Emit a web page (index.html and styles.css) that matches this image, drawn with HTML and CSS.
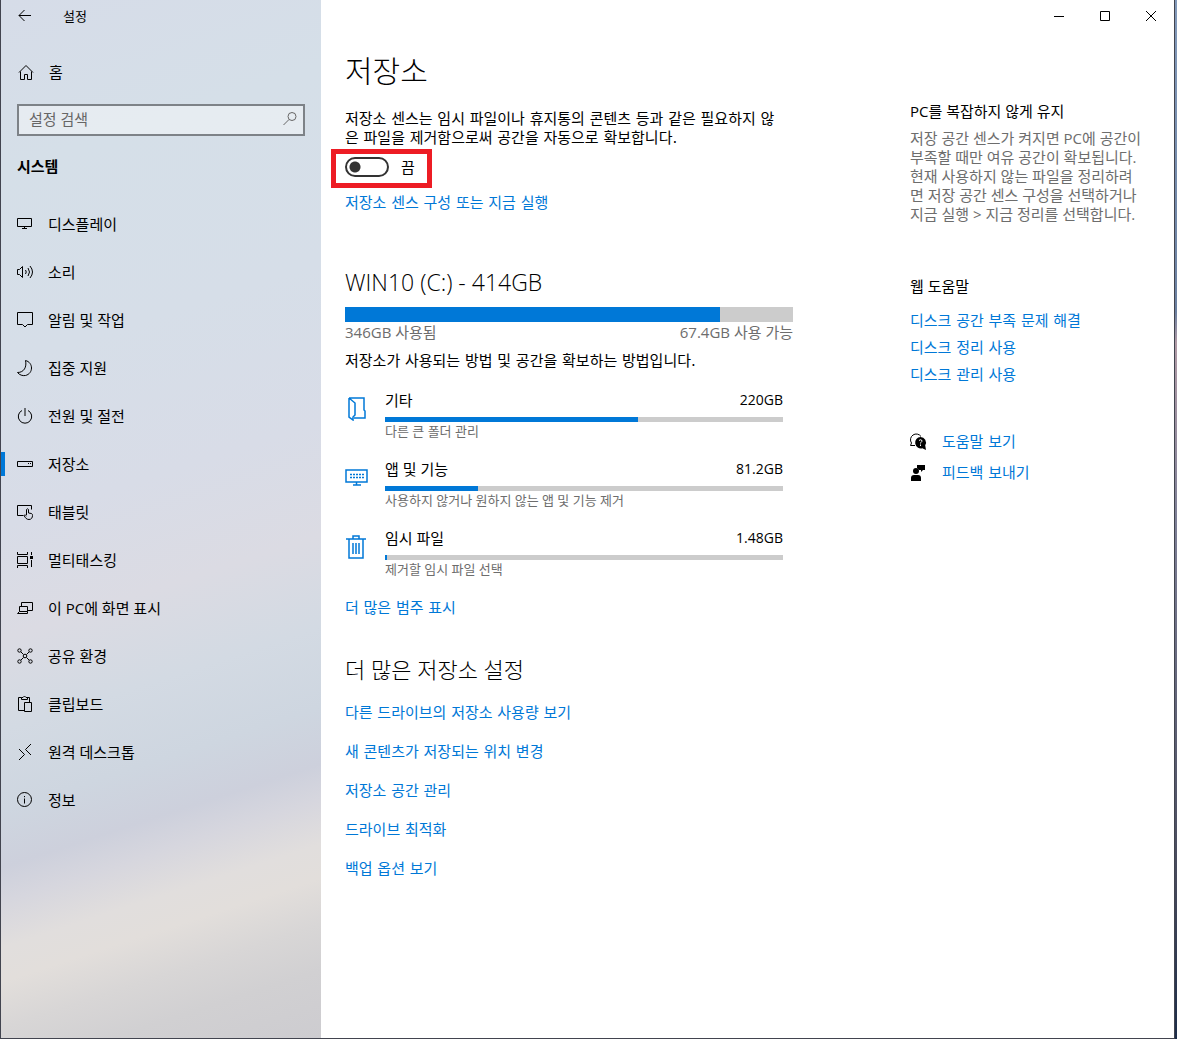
FILE: index.html
```html
<!DOCTYPE html>
<html lang="ko">
<head>
    <meta charset="UTF-8">
    <meta name="viewport" content="width=device-width, initial-scale=1.0">
    <title>설정</title>
    <link rel="stylesheet" href="styles.css">
</head>
<body>
    <div class="window">
        <aside class="sidebar">
            <div class="app-bar">
                <button class="back" aria-label="뒤로">
                    <svg class="icon" viewBox="0 0 16 16"><path d="M14 8.5H2M7.5 3 2 8.5 7.5 14"/></svg>
                </button>
                <span>설정</span>
            </div>
            <a class="nav-item home" href="#">
                <svg class="icon" viewBox="0 0 16 16"><path d="M2 8.5l7-7 7 7M3.500 7.500v8h4v-5h3v5h4v-8"/></svg>
                홈
            </a>
            <form class="search">
                <input type="text" placeholder="설정 검색" aria-label="설정 검색">
                <svg class="icon" viewBox="0 0 16 16"><circle cx="11" cy="5.5" r="4"/><path d="M8 8.500l-5.500 5.500"/></svg>
            </form>
            <h2 class="group-title">시스템</h2>
            <nav>
                <a class="nav-item" href="#">
                    <svg class="icon" viewBox="0 0 16 16"><path d="M.5 2.5h14v8H.5zM7.5 10.500v2.500M5 12.500h5"/></svg>
                    디스플레이
                </a>
                <a class="nav-item" href="#">
                    <svg class="icon" viewBox="0 0 16 16"><path d="M.5 5.500h2l3-3v11l-3-3h-2zM8.500 6q1.500 2 0 4M11 4q3 4 0 8M13 2q5 6 0 12"/></svg>
                    소리
                </a>
                <a class="nav-item" href="#">
                    <svg class="icon" viewBox="0 0 16 16"><path d="M.5.5h15v12h-5L8 15l-2.500-2.500h-5z"/></svg>
                    알림 및 작업
                </a>
                <a class="nav-item" href="#">
                    <svg class="icon" viewBox="0 0 16 16"><path d="M8.500.5c8 2 8 13 0 15-3 .5-6-.5-8-3C7 12.500 10 7 8.500.5z"/></svg>
                    집중 지원
                </a>
                <a class="nav-item" href="#">
                    <svg class="icon" viewBox="0 0 16 16"><path d="M8 0v8M5 2.500a6.700 6.700 0 1 0 6 0"/></svg>
                    전원 및 절전
                </a>
                <a class="nav-item active" href="#" aria-current="page">
                    <svg class="icon" viewBox="0 0 16 16"><path d="M.5 5.500h15v5H.5zM11 7.500h1M13 7.500h1"/></svg>
                    저장소
                </a>
                <a class="nav-item" href="#">
                    <svg class="icon" viewBox="0 0 16 16"><path d="M6.500 11.500h-6v-10h14v4M9.500 11V5.500q1-1.500 2 0V9l3 .5q1 .5 1 2c0 2-1 4-3.500 4-2.500 0-3.500-1.500-5-4 1-1 2 0 2.500.5"/></svg>
                    태블릿
                </a>
                <a class="nav-item" href="#">
                    <svg class="icon" viewBox="0 0 16 16"><path d="M.5 0v2.500h10V0M.5 16v-2.500h10V16M.5 4.500h10v7H.5zM14.500 0v3M14.500 8v7"/><path class="solid" d="M13 4h3v3h-3z"/></svg>
                    멀티태스킹
                </a>
                <a class="nav-item" href="#">
                    <svg class="icon" viewBox="0 0 16 16"><path d="M4.500 6V2.500h11v8h-5M2.500 6.500h8v5h-8zM2.500 11.500l-2 2h10v-2"/></svg>
                    이 PC에 화면 표시
                </a>
                <a class="nav-item" href="#">
                    <svg class="icon" viewBox="0 0 16 16"><path d="M4 4l2.500 2.500M12 4 9.500 6.500M4 12l2.500-2.500M12 12 9.500 9.500"/><circle cx="2.500" cy="2.500" r="1.700"/><circle cx="13.500" cy="2.500" r="1.700"/><circle cx="2.500" cy="13.500" r="1.700"/><circle cx="13.500" cy="13.500" r="1.700"/><circle cx="8" cy="8" r="1.800"/></svg>
                    공유 환경
                </a>
                <a class="nav-item" href="#">
                    <svg class="icon" viewBox="0 0 16 16"><path d="M7 14.500H1.500v-13h3M10 1.500h2.500V6M4.500 3.500v-2H6l1.500-1.500L9 1.500h1.500v2zM7.500 6.500h7v9h-7z"/></svg>
                    클립보드
                </a>
                <a class="nav-item" href="#">
                    <svg class="icon" viewBox="0 0 16 16"><path d="M2 5l5.500 5.500L2 16M14 0 8.500 5.500 14 11"/></svg>
                    원격 데스크톱
                </a>
                <a class="nav-item" href="#">
                    <svg class="icon" viewBox="0 0 16 16"><circle cx="7.500" cy="7.500" r="7"/><path d="M7.500 6.500v5M7.500 4v1.200"/></svg>
                    정보
                </a>
            </nav>
        </aside>

        <div class="page">
            <div class="window-buttons">
                <button aria-label="최소화"><svg viewBox="0 0 10 10"><path d="M0 5.500h10"/></svg></button>
                <button aria-label="최대화"><svg viewBox="0 0 10 10"><path d="M.5.5h9v9h-9z"/></svg></button>
                <button aria-label="닫기"><svg viewBox="0 0 10 10"><path d="M0 0l10 10M10 0 0 10"/></svg></button>
            </div>
            <div class="columns">
                <main class="content">
                    <h1>저장소</h1>
                    <p class="intro">저장소 센스는 임시 파일이나 휴지통의 콘텐츠 등과 같은 필요하지 않<br>은 파일을 제거함으로써 공간을 자동으로 확보합니다.</p>
                    <label class="toggle">
                        <input type="checkbox" role="switch">
                        <span>끔</span>
                    </label>
                    <a class="sense-link" href="#">저장소 센스 구성 또는 지금 실행</a>

                    <section class="drive">
                        <h2>WIN10 (C:) - 414GB</h2>
                        <div class="bar bar-large"><div class="fill" style="width: 83.7%"></div></div>
                        <div class="drive-labels">
                            <span>346GB 사용됨</span>
                            <span>67.4GB 사용 가능</span>
                        </div>
                        <p class="drive-note">저장소가 사용되는 방법 및 공간을 확보하는 방법입니다.</p>
                        <ul class="categories">
                            <li>
                                <svg class="cat-icon" viewBox="0 0 24 24"><path d="M4 1h15v12l1 1v7H9M4 1v19l4 3v-3l2-2V6L4 1"/></svg>
                                <div class="cat-body">
                                    <div class="cat-head"><span>기타</span><span class="size">220GB</span></div>
                                    <div class="bar"><div class="fill" style="width: 63.5%"></div></div>
                                    <small>다른 큰 폴더 관리</small>
                                </div>
                            </li>
                            <li>
                                <svg class="cat-icon" viewBox="0 0 24 24"><path d="M1 4h21v12H1zM11.500 16v3M8 19h8"/><path stroke-dasharray="2 1" d="M5 8.500h14M5 11.500h14"/></svg>
                                <div class="cat-body">
                                    <div class="cat-head"><span>앱 및 기능</span><span class="size">81.2GB</span></div>
                                    <div class="bar"><div class="fill" style="width: 23.4%"></div></div>
                                    <small>사용하지 않거나 원하지 않는 앱 및 기능 제거</small>
                                </div>
                            </li>
                            <li>
                                <svg class="cat-icon" viewBox="0 0 24 24"><path d="M1 4h20M8 4V1h6v3M4 4v19h14V4M8 8v11M11 8v11M14 8v11"/></svg>
                                <div class="cat-body">
                                    <div class="cat-head"><span>임시 파일</span><span class="size">1.48GB</span></div>
                                    <div class="bar"><div class="fill" style="width: 0.5%"></div></div>
                                    <small>제거할 임시 파일 선택</small>
                                </div>
                            </li>
                        </ul>
                        <a href="#">더 많은 범주 표시</a>
                    </section>

                    <section class="more">
                        <h2>더 많은 저장소 설정</h2>
                        <a href="#">다른 드라이브의 저장소 사용량 보기</a>
                        <a href="#">새 콘텐츠가 저장되는 위치 변경</a>
                        <a href="#">저장소 공간 관리</a>
                        <a href="#">드라이브 최적화</a>
                        <a href="#">백업 옵션 보기</a>
                    </section>
                </main>

                <aside class="help">
                    <h3>PC를 복잡하지 않게 유지</h3>
                    <p>저장 공간 센스가 켜지면 PC에 공간이<br>부족할 때만 여유 공간이 확보됩니다.<br>현재 사용하지 않는 파일을 정리하려<br>면 저장 공간 센스 구성을 선택하거나<br>지금 실행 &gt; 지금 정리를 선택합니다.</p>
                    <h3>웹 도움말</h3>
                    <div class="help-links">
                        <a href="#">디스크 공간 부족 문제 해결</a>
                        <a href="#">디스크 정리 사용</a>
                        <a href="#">디스크 관리 사용</a>
                    </div>
                    <div class="support">
                        <a href="#">
                            <svg class="icon" viewBox="0 0 16 16"><path d="M5 11.500H.5l1-2.500A5.500 5.500 0 1 1 11 2.500"/><path class="solid" d="M10.500 3a5.500 5.500 0 0 1 4.700 8.300L16 16l-3.700-1.800A5.700 5.700 0 1 1 10.500 3z"/><path class="mark" d="M9 6.500q1.500-1.500 3 0c.5 1.200-1.500 1.500-1.500 3M10.500 10.500v1.500"/></svg>
                            도움말 보기
                        </a>
                        <a href="#">
                            <svg class="icon" viewBox="0 0 16 16"><path class="solid" d="M7 0h8v5h-2l-2 2V5H9L7 3z"/><circle class="solid" cx="6" cy="6" r="3"/><path class="solid" d="M1 16v-3q0-3 3-3h4q3 0 3 3v3z"/></svg>
                            피드백 보내기
                        </a>
                    </div>
                </aside>
            </div>
        </div>
    </div>
</body>
</html>
```

FILE: styles.css
```css
:root {
    --accent: #0078d7;
    --text: #000;
    --muted: #6d6d6d;
    --track: #ccc;
}

*, *::before {
    box-sizing: border-box;
    margin: 0;
    padding: 0;
}

body {
    font-family: "Open Sans", "Noto Sans CJK KR", sans-serif;
    font-size: 15px;
    line-height: 20px;
    color: var(--text);
    padding-right: 2px;
    background: linear-gradient(#8299b9, #6b80a0 30%, #b09aa5 33%, #7d7f96 50%, #45485a 85%, #1c2c48);
}

a {
    color: var(--accent);
    text-decoration: none;
}

button {
    border: none;
    background: none;
}

h1, h2, h3 {
    font-weight: normal;
}

.window {
    display: flex;
    min-height: 100vh;
    border: solid #42444f;
    border-width: 0 1px 1px;
    background-color: #fff;
}

.icon {
    width: 16px;
    height: 16px;
    flex: none;
    fill: none;
    stroke: currentColor;
    overflow: visible;
}

.solid {
    fill: #000;
    stroke: none;
}

.mark {
    stroke: #fff;
}

/* Sidebar */
.sidebar {
    flex: 0 0 320px;
    background: linear-gradient(162deg, #d6dce8, #d5dfe8 15%, #d6dee8 32%, #d8dce7 46%, #dbdbe3 56%, #d3dae3 64%, #ced6e0 71%, #cdd0dc 76%, #d6d6de 79%, #e1dedd 83%, #e2dedb 86%, #d8d6d6 90%, #d1d0d2 94%, #cdccd0);
}

.app-bar {
    display: flex;
    align-items: center;
    height: 32px;
    font-size: 13px;
}

.back {
    width: 48px;
    height: 32px;
    margin-right: 14px;
}

.nav-item {
    display: flex;
    align-items: center;
    gap: 15px;
    height: 48px;
    padding-left: 16px;
    color: var(--text);
}

.home {
    gap: 16px;
    margin-top: 16px;
}

.active {
    background: linear-gradient(var(--accent), var(--accent)) left center / 4px 24px no-repeat;
}

.search {
    display: flex;
    align-items: center;
    height: 32px;
    margin: 8px 16px 0;
    padding: 0 6px 2px 10px;
    border: 2px solid #7d8287;
    background-color: rgba(255, 255, 255, 0.4);
    color: #666;
}

.search input {
    flex: 1;
    min-width: 0;
    border: none;
    outline: none;
    background: none;
    font: inherit;
}

.search input::placeholder {
    color: #666;
}

.group-title {
    margin: 20px 16px 24px;
    font-size: 15px;
    font-weight: bold;
}

/* Title bar buttons */
.page {
    flex: 1;
    min-width: 0;
}

.window-buttons {
    display: flex;
    justify-content: flex-end;
}

.window-buttons button {
    width: 46px;
    height: 32px;
}

.window-buttons svg {
    width: 10px;
    height: 10px;
    fill: none;
    stroke: #000;
}

/* Content */
.columns {
    display: flex;
    justify-content: space-between;
    padding: 0 24px;
}

.content {
    flex: 0 1 448px;
}

/* Hangul-only text, with a wider space between words */
.intro, .drive-note, .content a, .help a {
    font-family: "DejaVu Sans", "Noto Sans CJK KR", sans-serif;
}

h1 {
    margin: 19px 0;
    font-size: 30px;
    font-weight: 300;
    line-height: 40px;
}

.intro {
    line-height: 19px;
}

.toggle {
    position: relative;
    display: flex;
    align-items: center;
    gap: 12px;
    height: 37px;
}

/* red highlight drawn round the switch */
.toggle::before {
    content: "";
    position: absolute;
    top: 1px;
    left: -14px;
    width: 101px;
    height: 39px;
    border: 5px solid #ed1c24;
}

.toggle input {
    appearance: none;
    width: 44px;
    height: 20px;
    border: 2px solid #333;
    border-radius: 10px;
    background: radial-gradient(circle at 8px 8px, #333 5px, transparent 6px);
}

.sense-link {
    display: block;
    margin-top: 8px;
}

.drive {
    margin-top: 53px;
}

.drive h2 {
    margin-bottom: 9px;
    font-size: 23px;
    font-weight: 300;
    line-height: 32px;
}

.bar {
    height: 5px;
    background-color: var(--track);
}

.bar-large {
    height: 15px;
}

.fill {
    height: 100%;
    background-color: var(--accent);
}

.drive-labels {
    display: flex;
    justify-content: space-between;
    color: var(--muted);
}

.drive-note {
    margin: 9px 0 19px;
}

.categories {
    list-style: none;
    padding-right: 10px;
}

.categories li {
    display: flex;
    gap: 16px;
    margin-bottom: 19px;
}

.cat-icon {
    width: 24px;
    height: 24px;
    margin-top: 7px;
    fill: none;
    stroke: var(--accent);
    stroke-width: 1.5;
}

.cat-body {
    flex: 1;
}

.cat-head {
    display: flex;
    justify-content: space-between;
    margin-bottom: 7px;
}

.size {
    font-size: 14px;
}

.cat-body small {
    display: block;
    font-size: 13px;
    line-height: 18px;
    color: var(--muted);
}

.more {
    display: flex;
    flex-direction: column;
    align-items: flex-start;
    gap: 19px;
    margin-top: 36px;
}

.more h2 {
    font-size: 22px;
    font-weight: 300;
    line-height: 30px;
}

/* Help column */
.help {
    flex: 0 0 240px;
    padding-top: 69px;
}

.help h3 {
    font-size: 15px;
}

.help p {
    margin: 8px 0 52px;
    line-height: 19px;
    color: var(--muted);
}

.help-links {
    display: flex;
    flex-direction: column;
    gap: 7px;
    margin: 15px 0 47px;
}

.support {
    display: flex;
    flex-direction: column;
    gap: 11px;
}

.support a {
    display: flex;
    align-items: center;
    gap: 16px;
}

.support .icon {
    color: #000;
}
```
